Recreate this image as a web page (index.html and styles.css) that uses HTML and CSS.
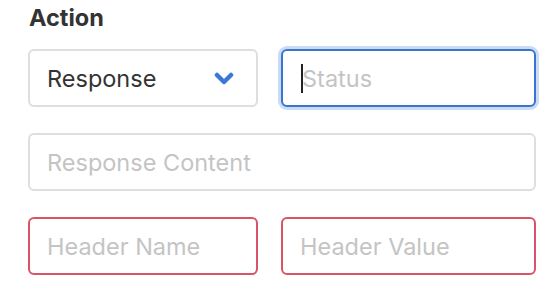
FILE: index.html
```html
<!DOCTYPE html>
<html lang="en">
<head>
    <meta charset="UTF-8">
    <meta name="viewport" content="width=device-width, initial-scale=1.0">
    <title>Action</title>
    <link rel="stylesheet" href="styles.css">
</head>
<body>

    <div class="action-form">
        <h3>Action</h3>

        <div class="fields">
            <!-- Action type -->
            <div class="select-box">
                <span>Response</span>
                <svg class="chevron" width="20" height="13" viewBox="0 0 20 13">
                    <path d="M3 3 L10 10 L17 3" fill="none" stroke="#3b78d6" stroke-width="4.5" stroke-linecap="round" stroke-linejoin="round"/>
                </svg>
            </div>

            <!-- Status (focused) -->
            <div class="field-wrap">
                <input type="text" class="field focused" placeholder="Status">
                <span class="caret"></span>
            </div>

            <input type="text" class="field wide" placeholder="Response Content">

            <input type="text" class="field invalid" placeholder="Header Name">
            <input type="text" class="field invalid" placeholder="Header Value">
        </div>
    </div>

</body>
</html>
```

FILE: styles.css
```css
/* Global Styles */
body {
    font-family: Inter, "Noto Sans", Arial, sans-serif;
    margin: 0;
    padding: 0;
    background-color: #fff;
    color: #333;
}

.action-form {
    width: 508px;
    padding: 0 0 0 28px;
}

h3 {
    margin: 0;
    padding: 3px 0 0 1px;
    font-size: 23.5px;
    font-weight: 700;
    line-height: 30px;
    color: #333;
}

.fields {
    display: grid;
    grid-template-columns: 230px 1fr;
    column-gap: 23px;
    row-gap: 26px;
    margin-top: 16px;
}

/* Select */
.select-box {
    box-sizing: border-box;
    height: 58px;
    border: 2px solid #dedede;
    border-radius: 6px;
    display: flex;
    align-items: center;
    justify-content: space-between;
    padding: 0 22px 0 17px;
    font-size: 23.5px;
    color: #333;
}

.chevron {
    display: block;
    margin-top: 1px;
}

/* Inputs */
.field {
    box-sizing: border-box;
    width: 100%;
    height: 58px;
    border: 2px solid #dedede;
    border-radius: 6px;
    padding: 0 17px;
    font-family: inherit;
    font-size: 23.5px;
    color: #333;
    background: #fff;
    outline: none;
    margin: 0;
}

.field::placeholder {
    color: #c4c4c4;
}

.wide {
    grid-column: 1 / 3;
}

.invalid {
    border-color: #d9536b;
}

.field-wrap {
    position: relative;
}

.focused {
    border-color: #3b74d0;
    box-shadow: 0 0 0 3px #c9dbf5;
    padding-left: 19px;
}

.caret {
    position: absolute;
    left: 20px;
    top: 15px;
    width: 2px;
    height: 29px;
    background: #222;
}
```
